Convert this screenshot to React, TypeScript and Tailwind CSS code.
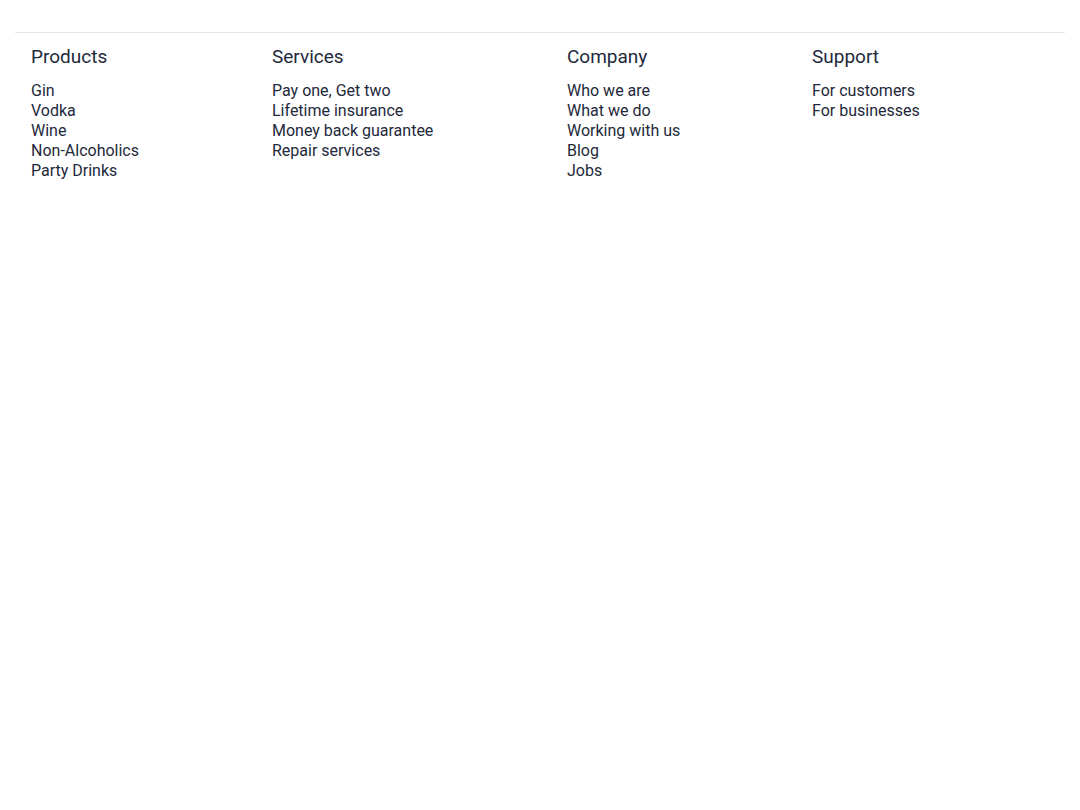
import React from "react";

const cols = [
  { title: "Products", w: "w-[241px]", items: ["Gin", "Vodka", "Wine", "Non-Alcoholics", "Party Drinks"] },
  { title: "Services", w: "w-[295px]", items: ["Pay one, Get two", "Lifetime insurance", "Money back guarantee", "Repair services"] },
  { title: "Company", w: "w-[245px]", items: ["Who we are", "What we do", "Working with us", "Blog", "Jobs"] },
  { title: "Support", w: "flex-1", items: ["For customers", "For businesses"] },
];

export default function App() {
  return (
    <div className="min-h-screen bg-white text-[#1e293b] font-['Roboto',sans-serif]">
      <div className="px-[15px] pt-[32px]">
        <div className="border-t border-[#e2e5ea] px-4 pt-[12px] flex">
          {cols.map((c) => (
            <div key={c.title} className={c.w}>
              <h3 className="text-[19px] leading-[24px]">{c.title}</h3>
              <ul className="mt-[12px]">
                {c.items.map((i) => (
                  <li key={i} className="text-[16px] leading-[20px]">{i}</li>
                ))}
              </ul>
            </div>
          ))}
        </div>
      </div>
    </div>
  );
}
